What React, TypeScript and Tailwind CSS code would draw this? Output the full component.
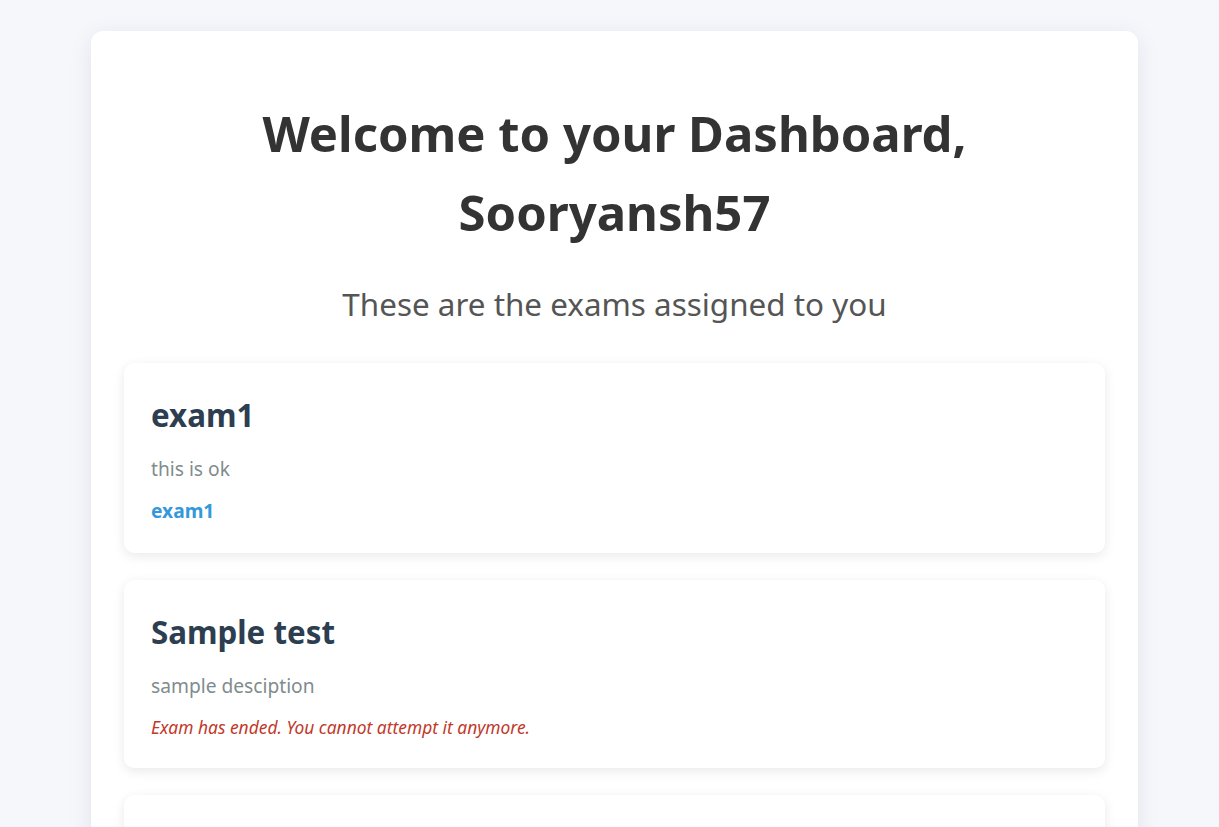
const exams = [
  { title: "exam1", desc: "this is ok", link: "exam1", ended: false },
  { title: "Sample test", desc: "sample desciption", link: "", ended: true },
  { title: "Practice round", desc: "practice exam", link: "Practice round", ended: false },
];

const App = () => {
  return (
    <div className="min-h-screen bg-[#f6f7fb] pt-[31px] pl-[91px] pb-10 font-['Noto_Sans',sans-serif]">
      <div className="w-[1047px] rounded-xl bg-white px-[33px] pt-[63px] pb-10 shadow-[0_4px_24px_rgba(20,30,80,0.08)]">
        <h1 className="text-center text-[49px] font-bold leading-[79px] text-[#333333]">
          Welcome to your Dashboard,
          <br />
          Sooryansh57
        </h1>
        <p className="mt-[30px] text-center text-[31.4px] leading-[44px] text-[#555555]">
          These are the exams assigned to you
        </p>

        <div className="mt-[37px] flex flex-col gap-[27px]">
          {exams.map((exam) => (
            <div
              key={exam.title}
              className="rounded-[10px] bg-white px-[27px] pt-[33px] pb-[28px] shadow-[0_3px_12px_rgba(0,0,0,0.09)]"
            >
              <h3 className="text-[31.3px] font-bold leading-[38px] text-[#2c3e50]">{exam.title}</h3>
              <p className="mt-[21px] text-[19.2px] leading-[28px] text-[#7f8c8d]">{exam.desc}</p>
              {exam.ended ? (
                <p className="mt-[14px] text-[17.4px] italic leading-[26px] text-[#c0392b]">
                  Exam has ended. You cannot attempt it anymore.
                </p>
              ) : (
                <a href="#" className="mt-[14px] block text-[19.2px] font-bold leading-[28px] text-[#3498db]">
                  {exam.link}
                </a>
              )}
            </div>
          ))}
        </div>
      </div>
    </div>
  );
};

export default App;
